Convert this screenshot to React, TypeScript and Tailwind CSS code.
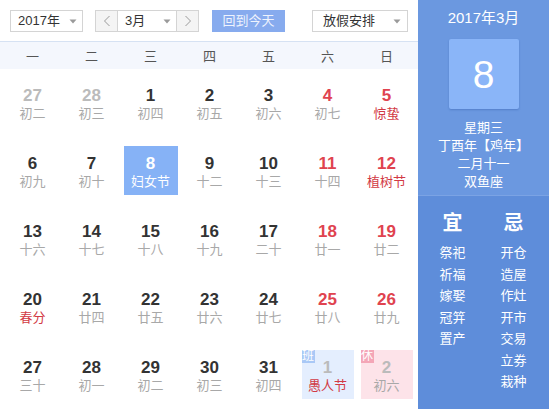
import React from "react";

type Day = {
  d: number;
  l: string;
  dim?: boolean;
  red?: boolean;
  lred?: boolean;
  sel?: boolean;
  ban?: boolean;
  xiu?: boolean;
};

const rows: Day[][] = [
  [
    { d: 27, l: "初二", dim: true },
    { d: 28, l: "初三", dim: true },
    { d: 1, l: "初四" },
    { d: 2, l: "初五" },
    { d: 3, l: "初六" },
    { d: 4, l: "初七", red: true },
    { d: 5, l: "惊蛰", red: true, lred: true },
  ],
  [
    { d: 6, l: "初九" },
    { d: 7, l: "初十" },
    { d: 8, l: "妇女节", sel: true },
    { d: 9, l: "十二" },
    { d: 10, l: "十三" },
    { d: 11, l: "十四", red: true },
    { d: 12, l: "植树节", red: true, lred: true },
  ],
  [
    { d: 13, l: "十六" },
    { d: 14, l: "十七" },
    { d: 15, l: "十八" },
    { d: 16, l: "十九" },
    { d: 17, l: "二十" },
    { d: 18, l: "廿一", red: true },
    { d: 19, l: "廿二", red: true },
  ],
  [
    { d: 20, l: "春分", lred: true },
    { d: 21, l: "廿四" },
    { d: 22, l: "廿五" },
    { d: 23, l: "廿六" },
    { d: 24, l: "廿七" },
    { d: 25, l: "廿八", red: true },
    { d: 26, l: "廿九", red: true },
  ],
  [
    { d: 27, l: "三十" },
    { d: 28, l: "初一" },
    { d: 29, l: "初二" },
    { d: 30, l: "初三" },
    { d: 31, l: "初四" },
    { d: 1, l: "愚人节", dim: true, lred: true, ban: true },
    { d: 2, l: "初六", dim: true, xiu: true },
  ],
];

const weeks = ["一", "二", "三", "四", "五", "六", "日"];
const yi = ["祭祀", "祈福", "嫁娶", "冠笄", "置产"];
const ji = ["开仓", "造屋", "作灶", "开市", "交易", "立券", "栽种"];

function Caret() {
  return (
    <svg width="8" height="5" viewBox="0 0 8 5" className="shrink-0">
      <path d="M0.5 0.5 L7.5 0.5 L4 4.5 Z" fill="#9a9a9a" />
    </svg>
  );
}

function Cell({ day }: { day: Day }) {
  let bg = "";
  if (day.sel) bg = "bg-[#86b2f6]";
  else if (day.ban) bg = "bg-[#e4eefe]";
  else if (day.xiu) bg = "bg-[#fde3e9]";

  let numColor = "text-[#333333]";
  if (day.sel) numColor = "text-white";
  else if (day.dim) numColor = "text-[#bbbbbb]";
  else if (day.red) numColor = "text-[#e0434f]";

  let lColor = "text-[#a8a8a8]";
  if (day.sel) lColor = "text-white";
  else if (day.lred) lColor = "text-[#d23a45]";

  const w = day.ban || day.xiu ? "w-[52px]" : "w-[54px]";

  return (
    <div className="h-[68px] flex justify-center">
      <div className={`relative mt-[9px] h-[49px] ${w} ${bg} flex flex-col items-center`}>
        {day.ban && (
          <span className="absolute left-0 top-0 w-[13px] h-[13px] bg-[#a9c8f6] text-white text-[12px] leading-[13px] text-center">
            班
          </span>
        )}
        {day.xiu && (
          <span className="absolute left-0 top-0 w-[13px] h-[13px] bg-[#f4a6b7] text-white text-[12px] leading-[13px] text-center">
            休
          </span>
        )}
        <div className={`mt-[8px] text-[17px] leading-[20px] font-bold ${numColor}`}>{day.d}</div>
        <div className={`text-[13px] leading-[16px] whitespace-nowrap ${lColor}`}>{day.l}</div>
      </div>
    </div>
  );
}

export default function App() {
  return (
    <div
      className="w-[549px] h-[409px] flex overflow-hidden bg-white"
      style={{ fontFamily: '"Liberation Sans", "Noto Sans CJK SC", sans-serif' }}
    >
      <div className="w-[418px] flex flex-col">
        <div className="h-[43px] border-b border-[#d6e2f3] flex items-start pt-[10px]">
          <div className="ml-[10px] w-[73px] h-[22px] border border-[#d4d4d4] bg-white flex items-center justify-between pl-[7px] pr-[5px]">
            <span className="text-[13px] text-[#333]">2017年</span>
            <Caret />
          </div>
          <div className="ml-[12px] flex h-[22px]">
            <div className="w-[23px] h-[22px] border border-[#d4d4d4] bg-[#f4f4f4] flex items-center justify-center">
              <svg width="8" height="12" viewBox="0 0 8 12">
                <path d="M6.5 1 L1.5 6 L6.5 11" fill="none" stroke="#9a9a9a" strokeWidth="1" />
              </svg>
            </div>
            <div className="w-[58px] h-[22px] border-y border-[#d4d4d4] bg-white flex items-center justify-between pl-[7px] pr-[5px]">
              <span className="text-[13px] text-[#333]">3月</span>
              <Caret />
            </div>
            <div className="w-[23px] h-[22px] border border-[#d4d4d4] bg-[#f4f4f4] flex items-center justify-center">
              <svg width="8" height="12" viewBox="0 0 8 12">
                <path d="M1.5 1 L6.5 6 L1.5 11" fill="none" stroke="#9a9a9a" strokeWidth="1" />
              </svg>
            </div>
          </div>
          <div className="ml-[13px] w-[73px] h-[22px] bg-[#87abee] flex items-center justify-center text-[13px] text-[#eef3fd]">
            回到今天
          </div>
          <div className="ml-[27px] w-[96px] h-[22px] border border-[#d4d4d4] bg-white flex items-center justify-between pl-[10px] pr-[6px]">
            <span className="text-[13px] text-[#333]">放假安排</span>
            <Caret />
          </div>
        </div>
        <div className="h-[27px] bg-[#f4f7fd] grid grid-cols-[repeat(7,59px)] pl-[3px] items-center">
          {weeks.map((w) => (
            <div key={w} className="text-center text-[13px] text-[#555] pt-[2px]">
              {w}
            </div>
          ))}
        </div>
        <div className="grid grid-cols-[repeat(7,59px)] pl-[3px]">
          {rows.flat().map((day, i) => (
            <Cell key={i} day={day} />
          ))}
        </div>
      </div>
      <div className="w-[131px] flex flex-col bg-[#6b98e0] text-white">
        <div className="h-[196px] flex flex-col items-center border-b border-[#7ba3e4]">
          <div className="pt-[8px] text-[15px] leading-[20px]">2017年3月</div>
          <div className="mt-[11px] w-[70px] h-[70px] bg-[#8ab5f8] rounded-[2px] shadow-[0_1px_2px_rgba(40,80,160,0.35)] flex items-center justify-center text-[39px] leading-none">
            8
          </div>
          <div className="mt-[10px] flex flex-col items-center text-[13px] leading-[18px]">
            <div>星期三</div>
            <div>丁酉年【鸡年】</div>
            <div>二月十一</div>
            <div>双鱼座</div>
          </div>
        </div>
        <div className="flex-1 bg-[#5e8dda] grid grid-cols-[repeat(2,61px)] px-[4px] pt-[14px] content-start">
          <div className="flex flex-col items-center">
            <div className="text-[20px] leading-[26px] font-bold">宜</div>
            <div className="mt-[6px] flex flex-col items-center text-[13px] leading-[21.5px]">
              {yi.map((t) => (
                <div key={t}>{t}</div>
              ))}
            </div>
          </div>
          <div className="flex flex-col items-center">
            <div className="text-[20px] leading-[26px] font-bold">忌</div>
            <div className="mt-[6px] flex flex-col items-center text-[13px] leading-[21.5px]">
              {ji.map((t) => (
                <div key={t}>{t}</div>
              ))}
            </div>
          </div>
        </div>
      </div>
    </div>
  );
}
